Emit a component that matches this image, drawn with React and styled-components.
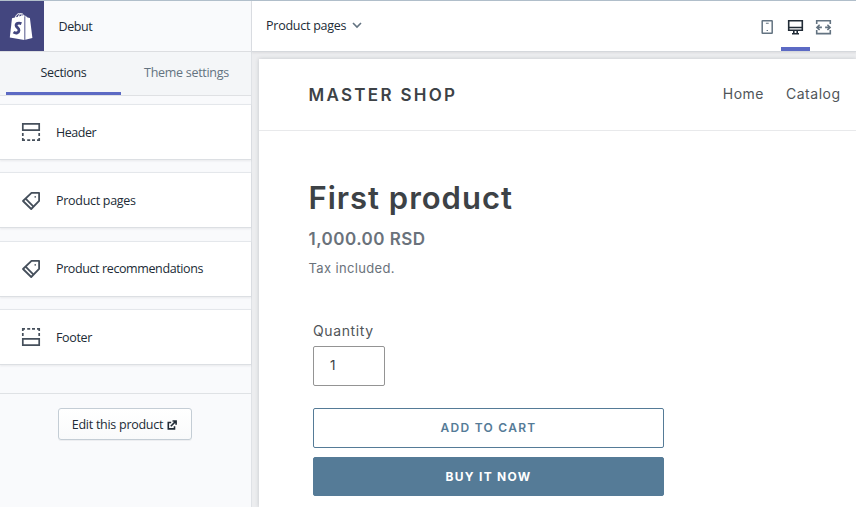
import React from "react";
import styled, { createGlobalStyle } from "styled-components";

const GlobalStyle = createGlobalStyle`
  * { box-sizing: border-box; }
  html, body { margin: 0; height: 100%; overflow: hidden; }
  button, input { font: inherit; margin: 0; }
`;

const Editor = styled.div`
  display: grid;
  grid-template-columns: 252px 1fr;
  height: 507px;
  border-top: 1px solid #b1bfcb;
  font-family: "Open Sans", "Noto Sans", sans-serif;
  font-size: 12.5px;
  color: #212b36;
`;

const Sidebar = styled.aside`
  display: flex;
  flex-direction: column;
  background: #f9fafc;
  border-right: 1px solid #dfe2e6;
`;

const ThemeBar = styled.header`
  display: flex;
  height: 51px;
  align-items: center;
  gap: 14.5px;
  border-bottom: 1px solid #dcdee1;
`;

const LogoTile = styled.div`
  width: 44px;
  height: 50px;
  background: #43467f;
  svg { display: block; }
`;

const Label = styled.span`
  white-space: nowrap;
  letter-spacing: ${(p) => p.$spacing || "0"};
`;

const Tabs = styled.nav`
  display: flex;
  height: 44px;
  padding-left: 6px;
  background: #f4f6f8;
  border-bottom: 1px solid #dfe1e4;
`;

const Tab = styled.button`
  flex: none;
  width: ${(p) => p.$width};
  padding: 1px 0 0;
  border: 0;
  border-bottom: 3px solid ${(p) => (p.$active ? "#5c6ac4" : "transparent")};
  background: none;
  color: ${(p) => (p.$active ? "#212b36" : "#637381")};
`;

const SectionList = styled.div`
  display: grid;
  grid-template-rows: 56px 56px 56px 56px;
  row-gap: 12.4px;
  padding-top: 8px;
`;

const SectionRow = styled.div`
  display: flex;
  align-items: center;
  gap: 15px;
  padding: 0.4px 0 0 21px;
  background: #fff;
  border-top: 1px solid #e4e7eb;
  border-bottom: 1px solid #dcdfe3;
  box-shadow: 0 1px 2px rgba(33, 43, 54, 0.08);
`;

const SidebarFooter = styled.footer`
  display: flex;
  flex: 1;
  margin-top: 27.8px;
  padding: 14px 2px 0 0;
  justify-content: center;
  align-items: flex-start;
  border-top: 1px solid #dfe2e5;
`;

const EditButton = styled.button`
  display: flex;
  align-items: center;
  justify-content: center;
  gap: 4px;
  width: 134px;
  height: 32px;
  padding: 2px 0 0;
  color: #212b36;
  background: linear-gradient(#fff, #f9fafb);
  border: 1px solid #c4cdd5;
  border-radius: 3px;
  box-shadow: 0 1px 0 rgba(22, 29, 37, 0.05);
`;

const Main = styled.main`
  display: flex;
  flex-direction: column;
  min-width: 0;
  background: #ecedef;
`;

const Toolbar = styled.header`
  display: flex;
  justify-content: space-between;
  height: 51px;
  padding: 0 18px 0 14px;
  background: #fff;
  border-bottom: 1px solid #d5d8dc;
  box-shadow: 0 1px 2px rgba(33, 43, 54, 0.08);
`;

const PageSelect = styled.button`
  display: flex;
  align-items: center;
  gap: 6px;
  padding: 0 0 2px;
  border: 0;
  background: none;
  color: #212b36;
`;

const DeviceSwitch = styled.div`
  display: flex;
  height: 50px;
`;

const DeviceButton = styled.button`
  display: flex;
  justify-content: center;
  width: ${(p) => p.$width || "29px"};
  height: 50px;
  padding: 17px 0 0;
  border: 0;
  border-bottom: 4px solid ${(p) => (p.$active ? "#5c6ac4" : "transparent")};
  background: none;
  color: ${(p) => (p.$active ? "#212b36" : "#637381")};
`;

const Preview = styled.div`
  flex: 1;
  margin: 7px 0 0 7px;
  background: #fff;
  box-shadow: 0 0 4px rgba(33, 43, 54, 0.2);
  font-family: Inter, "Noto Sans", sans-serif;
  color: #3d4246;
`;

const StoreHeader = styled.header`
  display: flex;
  align-items: center;
  justify-content: space-between;
  height: 72px;
  padding: 0 15.5px 0 49.5px;
  border-bottom: 1px solid #e8e9eb;
`;

const StoreName = styled.div`
  font-size: 17px;
  font-weight: 600;
  letter-spacing: 2.3px;
`;

const StoreNav = styled.nav`
  display: flex;
  gap: 22px;
  padding-bottom: 2px;
  font-size: 14px;
  letter-spacing: 0.5px;
  color: #505559;
`;

const Product = styled.section`
  display: flex;
  flex-direction: column;
  align-items: flex-start;
  padding: 46px 0 0 49.5px;
`;

const Title = styled.h1`
  margin: 0;
  font-size: 31px;
  line-height: 42px;
  font-weight: 600;
  letter-spacing: 0.98px;
`;

const Price = styled.div`
  margin-top: 8px;
  font-size: 17px;
  line-height: 24px;
  font-weight: 600;
  letter-spacing: 0.47px;
  color: #6a727b;
`;

const TaxNote = styled.div`
  margin-top: 7px;
  font-size: 13px;
  line-height: 20px;
  letter-spacing: 0.35px;
  color: #6a727b;
`;

const PurchaseForm = styled.div`
  display: flex;
  flex-direction: column;
  width: 351px;
  margin: 42px 0 0 4.5px;
`;

const QuantityLabel = styled.label`
  height: 26px;
  line-height: 22px;
  font-size: 14px;
  letter-spacing: 0.6px;
  color: #505559;
`;

const QuantityInput = styled.input`
  width: 72px;
  height: 40px;
  padding: 0 16px 2px;
  border: 1px solid #949494;
  border-radius: 2px;
  color: #3d4246;
  background: #fff;
  font-size: 13.5px;
  outline: 0;
`;

const ActionButton = styled.button`
  height: ${(p) => (p.$filled ? "39px" : "40px")};
  margin-top: ${(p) => (p.$filled ? "9px" : "22px")};
  padding: 0 0 1px;
  border: 1px solid #557b97;
  border-radius: 2px;
  background: ${(p) => (p.$filled ? "#557b97" : "#fff")};
  color: ${(p) => (p.$filled ? "#fff" : "#557b97")};
  font-size: 12px;
  font-weight: ${(p) => (p.$filled ? 700 : 600)};
  letter-spacing: ${(p) => p.$spacing};
`;

const ShopLogo = () => (
  <svg width="44" height="50" viewBox="0 0 44 50">
    <path d="M12 17.2 24.4 14v25L9.8 36.4z" fill="#fff" />
    <path d="m25.3 14.6 2.2 2 2.4.3L32.4 37l-7.1 1.8z" fill="#fff" />
    <path d="M15.3 17c.6-3.2 2.3-4.4 4.1-4.4 1.9 0 2.7 1.7 2.8 3.4M18.2 16.5c.6-2.6 1.9-3.9 3.2-3.9 1.5 0 2.3 1.6 2.6 3" fill="none" stroke="#fff" strokeWidth="1" />
    <path d="M21.4 22.6c-2.8-1.2-5.5-.2-5.3 1.9.2 2.1 3.1 2.3 2.9 4.8-.2 2.6-2.9 3.5-5.5 1.8" fill="none" stroke="#43467f" strokeWidth="2.8" />
  </svg>
);

const HeaderIcon = ({ flip }) => (
  <svg width="20" height="20" viewBox="0 0 20 20" fill="none" stroke="#454f5b" strokeWidth="1.7">
    <g transform={flip ? "matrix(1 0 0 -1 0 20)" : undefined}>
      <path d="M1.8 1.8h16.4v6.4H1.8z" />
      <path d="M1.8 11v3M18.2 11v3M1.8 16v2.2H4M18.2 16v2.2H16M6.2 18.2h3M11 18.2h3" />
    </g>
  </svg>
);

const TagIcon = () => (
  <svg width="20" height="20" viewBox="0 0 20 20" fill="none" stroke="#454f5b" strokeWidth="1.8" strokeLinejoin="round">
    <path d="M10.5 1.9h7.6v8L10.2 18 2 10z" />
    <path d="m4.6 7.7 7.9 8" />
    <circle cx="14.2" cy="5.9" r="0.8" fill="#454f5b" stroke="none" />
  </svg>
);

const ExternalIcon = () => (
  <svg width="10" height="10" viewBox="0 0 10 10" fill="none" stroke="#212b36" strokeWidth="1.6">
    <path d="M4.2 2.5H1.3v6.4h6.2V6.3M3.8 6.3l4.6-4.7M5.5 1h3.6v3.7" />
  </svg>
);

const ChevronIcon = () => (
  <svg width="10" height="7" viewBox="0 0 10 7" fill="none" stroke="#637381" strokeWidth="1.6">
    <path d="m1 1 4 4 4-4" />
  </svg>
);

const TabletIcon = () => (
  <svg width="18" height="18" viewBox="0 0 18 18" fill="none" stroke="currentColor" strokeWidth="1.5">
    <rect x="4.2" y="2.7" width="10" height="12.6" rx=".4" />
    <path d="M7.9 5.3h2.8M8.6 12.5H10" strokeWidth="1.1" />
  </svg>
);

const DesktopIcon = () => (
  <svg width="18" height="18" viewBox="0 0 18 18" fill="none" stroke="currentColor" strokeWidth="1.6">
    <path d="M1.7 2.7h13.6v9.6H1.7zM1.7 9.5h13.6M6.8 12.3v2.8M10.2 12.3v2.8M5 15.7h7" />
  </svg>
);

const ExpandIcon = () => (
  <svg width="18" height="18" viewBox="0 0 18 18" fill="none" stroke="currentColor" strokeWidth="1.6">
    <path d="M1.7 6V2.7h13.6V6M1.7 12v3.6h13.6V12M1.9 9.4h5M15.1 9.4h-5M4.6 6.7 1.9 9.4l2.7 2.6M12.4 6.7l2.7 2.7-2.7 2.6" />
  </svg>
);

const sections = [
  { name: "Header", icon: <HeaderIcon />, spacing: "-0.45px" },
  { name: "Product pages", icon: <TagIcon />, spacing: "-0.29px" },
  { name: "Product recommendations", icon: <TagIcon />, spacing: "-0.39px" },
  { name: "Footer", icon: <HeaderIcon flip />, spacing: "-0.35px" },
];

export default function App() {
  return (
    <>
      <GlobalStyle />
      <Editor>
        <Sidebar>
          <ThemeBar>
            <LogoTile><ShopLogo /></LogoTile>
            <Label $spacing="-0.4px">Debut</Label>
          </ThemeBar>
          <Tabs>
            <Tab $active $width="115px"><Label $spacing="-0.35px">Sections</Label></Tab>
            <Tab $width="131px"><Label $spacing="-0.29px">Theme settings</Label></Tab>
          </Tabs>
          <SectionList>
            {sections.map((s) => (
              <SectionRow key={s.name}>
                {s.icon}
                <Label $spacing={s.spacing}>{s.name}</Label>
              </SectionRow>
            ))}
          </SectionList>
          <SidebarFooter>
            <EditButton>
              <Label $spacing="-0.27px">Edit this product</Label>
              <ExternalIcon />
            </EditButton>
          </SidebarFooter>
        </Sidebar>
        <Main>
          <Toolbar>
            <PageSelect>
              <Label $spacing="-0.25px">Product pages</Label>
              <ChevronIcon />
            </PageSelect>
            <DeviceSwitch>
              <DeviceButton aria-label="Mobile"><TabletIcon /></DeviceButton>
              <DeviceButton $active aria-label="Desktop"><DesktopIcon /></DeviceButton>
              <DeviceButton $width="28px" aria-label="Full width"><ExpandIcon /></DeviceButton>
            </DeviceSwitch>
          </Toolbar>
          <Preview>
            <StoreHeader>
              <StoreName>MASTER SHOP</StoreName>
              <StoreNav>
                <span>Home</span>
                <span>Catalog</span>
              </StoreNav>
            </StoreHeader>
            <Product>
              <Title>First product</Title>
              <Price>1,000.00 RSD</Price>
              <TaxNote>Tax included.</TaxNote>
              <PurchaseForm>
                <QuantityLabel htmlFor="quantity">Quantity</QuantityLabel>
                <QuantityInput id="quantity" defaultValue="1" />
                <ActionButton $spacing="1.3px">ADD TO CART</ActionButton>
                <ActionButton $filled $spacing="1.3px">BUY IT NOW</ActionButton>
              </PurchaseForm>
            </Product>
          </Preview>
        </Main>
      </Editor>
    </>
  );
}
